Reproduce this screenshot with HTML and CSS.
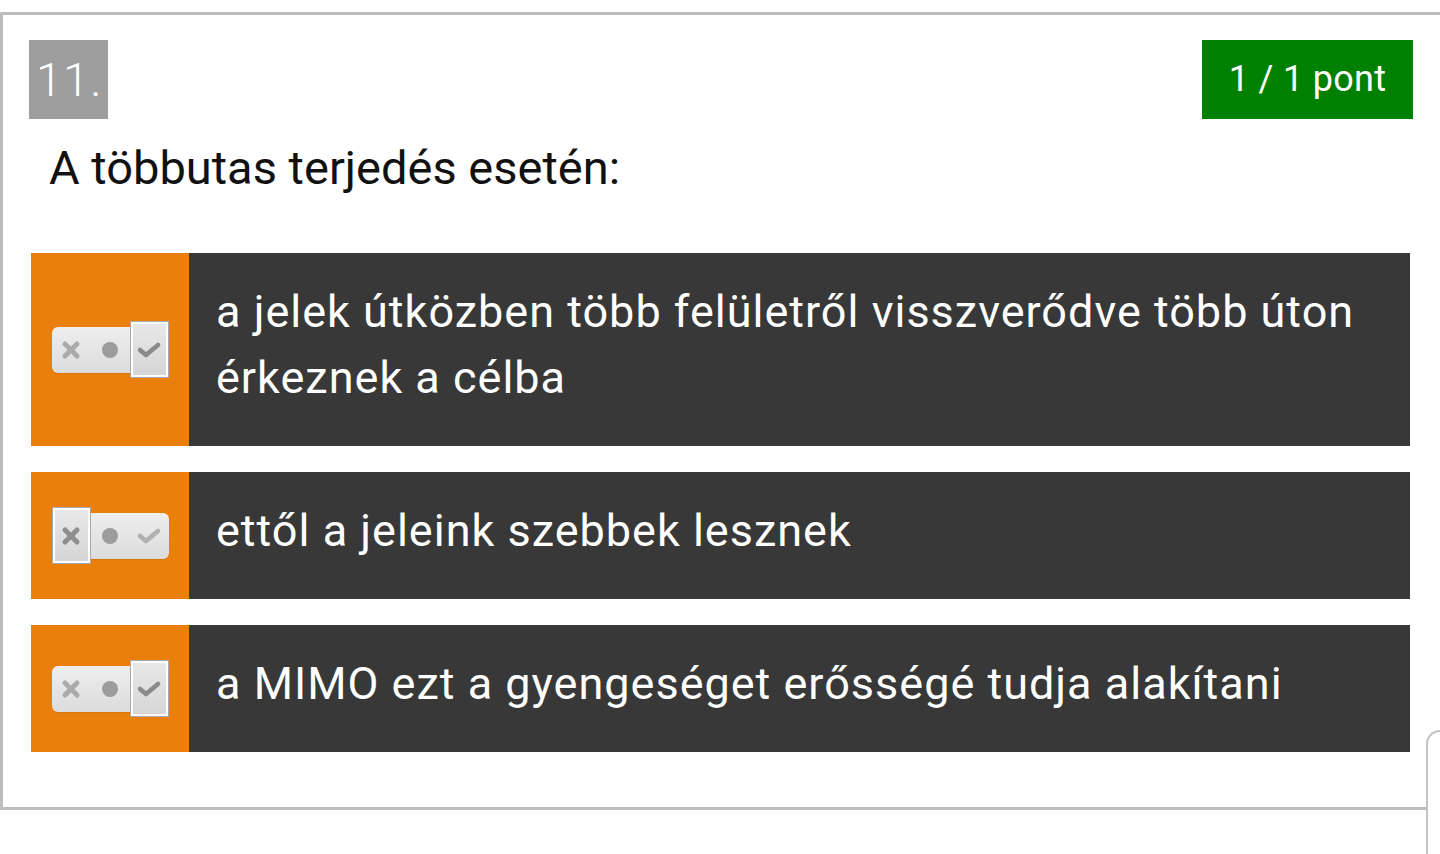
FILE: index.html
```html
<!DOCTYPE html>
<html lang="hu">
<head>
<meta charset="utf-8">
<link rel="stylesheet" href="styles.css">
</head>
<body>
<div class="card">
  <div class="head">
    <div class="num">11.</div>
    <div class="score">1 / 1 pont</div>
  </div>
  <div class="question">A többutas terjedés esetén:</div>
  <div class="options">
    <div class="opt">
      <div class="side">
        <div class="toggle">
          <span class="cell"><svg viewBox="0 0 20 20" width="20" height="20"><path d="M4 4 L16 16 M16 4 L4 16" stroke="#ababab" stroke-width="5" stroke-linecap="round"/></svg></span>
          <span class="cell"><span class="dot"></span></span>
          <span class="cell"><svg viewBox="0 0 26 18" width="26" height="18"><path d="M4 9 L10 14 L22 4" stroke="#8a8a8a" stroke-width="4.6" fill="none" stroke-linecap="round" stroke-linejoin="round"/></svg></span>
          <span class="sel sel-right"></span>
        </div>
      </div>
      <div class="text">a jelek útközben több felületről visszverődve több úton érkeznek a célba</div>
    </div>
    <div class="opt">
      <div class="side">
        <div class="toggle">
          <span class="cell"><svg viewBox="0 0 20 20" width="20" height="20"><path d="M4 4 L16 16 M16 4 L4 16" stroke="#8e8e8e" stroke-width="5" stroke-linecap="round"/></svg></span>
          <span class="cell"><span class="dot"></span></span>
          <span class="cell"><svg viewBox="0 0 26 18" width="26" height="18"><path d="M4 9 L10 14 L22 4" stroke="#b0b0b0" stroke-width="4.6" fill="none" stroke-linecap="round" stroke-linejoin="round"/></svg></span>
          <span class="sel sel-left"></span>
        </div>
      </div>
      <div class="text">ettől a jeleink szebbek lesznek</div>
    </div>
    <div class="opt">
      <div class="side">
        <div class="toggle">
          <span class="cell"><svg viewBox="0 0 20 20" width="20" height="20"><path d="M4 4 L16 16 M16 4 L4 16" stroke="#ababab" stroke-width="5" stroke-linecap="round"/></svg></span>
          <span class="cell"><span class="dot"></span></span>
          <span class="cell"><svg viewBox="0 0 26 18" width="26" height="18"><path d="M4 9 L10 14 L22 4" stroke="#8a8a8a" stroke-width="4.6" fill="none" stroke-linecap="round" stroke-linejoin="round"/></svg></span>
          <span class="sel sel-right"></span>
        </div>
      </div>
      <div class="text">a MIMO ezt a gyengeséget erősségé tudja alakítani</div>
    </div>
  </div>
</div>
<div class="edge"></div>
</body>
</html>
```

FILE: styles.css
```css
html, body {
  margin: 0;
  padding: 0;
  background: #ffffff;
  overflow: hidden;
  height: 854px;
  font-family: Roboto, "Noto Sans", "Liberation Sans", sans-serif;
}

.card {
  margin-top: 12px;
  width: 1440px;
  border: 3px solid #bdbdbd;
  border-right: none;
  padding: 25px 0 55px 0;
  box-sizing: border-box;
}

.head {
  display: flex;
  justify-content: space-between;
  align-items: flex-start;
  padding-left: 26px;
  width: 1410px;
  box-sizing: border-box;
}

.num {
  width: 79px;
  height: 79px;
  background: #9e9e9e;
  color: #ffffff;
  font-size: 47px;
  font-weight: 300;
  line-height: 79px;
  box-sizing: border-box;
  padding-left: 7px;
  letter-spacing: 1px;
}

.score {
  width: 211px;
  height: 79px;
  background: #008000;
  color: #ffffff;
  font-size: 36px;
  line-height: 79px;
  text-align: center;
  letter-spacing: 0.3px;
}

.question {
  margin: 21px 0 0 46px;
  font-size: 47px;
  line-height: 56px;
  color: #111111;
}

.options {
  margin: 57px 0 0 28px;
  width: 1379px;
  display: flex;
  flex-direction: column;
  gap: 26px;
}

.opt {
  display: flex;
  background: #383838;
}

.side {
  width: 158px;
  flex: none;
  background: #ea7f0c;
  display: flex;
  align-items: center;
  justify-content: center;
}

.text {
  flex: 1;
  color: #ffffff;
  font-size: 45px;
  letter-spacing: 1px;
  line-height: 66px;
  padding: 26px 40px 35px 27px;
}

.toggle {
  position: relative;
  width: 117px;
  height: 46px;
  border-radius: 6px;
  background: linear-gradient(#eeeeee, #dcdcdc);
  box-shadow: 0 1px 1px rgba(0,0,0,0.08);
  display: flex;
}

.cell {
  flex: 1;
  display: flex;
  align-items: center;
  justify-content: center;
  position: relative;
  z-index: 2;
}

.dot {
  width: 16px;
  height: 16px;
  border-radius: 50%;
  background: #9c9c9c;
}

.sel {
  position: absolute;
  top: -5px;
  width: 37px;
  height: 55px;
  box-sizing: border-box;
  border: 2px solid #ffffff;
  outline: 1px solid #a9a9a9;
  background: linear-gradient(#e8e8e8, #d6d6d6);
  z-index: 1;
}

.sel-right { right: 1px; }
.sel-left { left: 1px; }

.edge {
  position: absolute;
  left: 1426px;
  top: 730px;
  width: 14px;
  height: 122px;
  border-left: 2px solid #c4c4c4;
  border-top: 2px solid #c4c4c4;
  border-top-left-radius: 14px;
  background: #ffffff;
}
```
